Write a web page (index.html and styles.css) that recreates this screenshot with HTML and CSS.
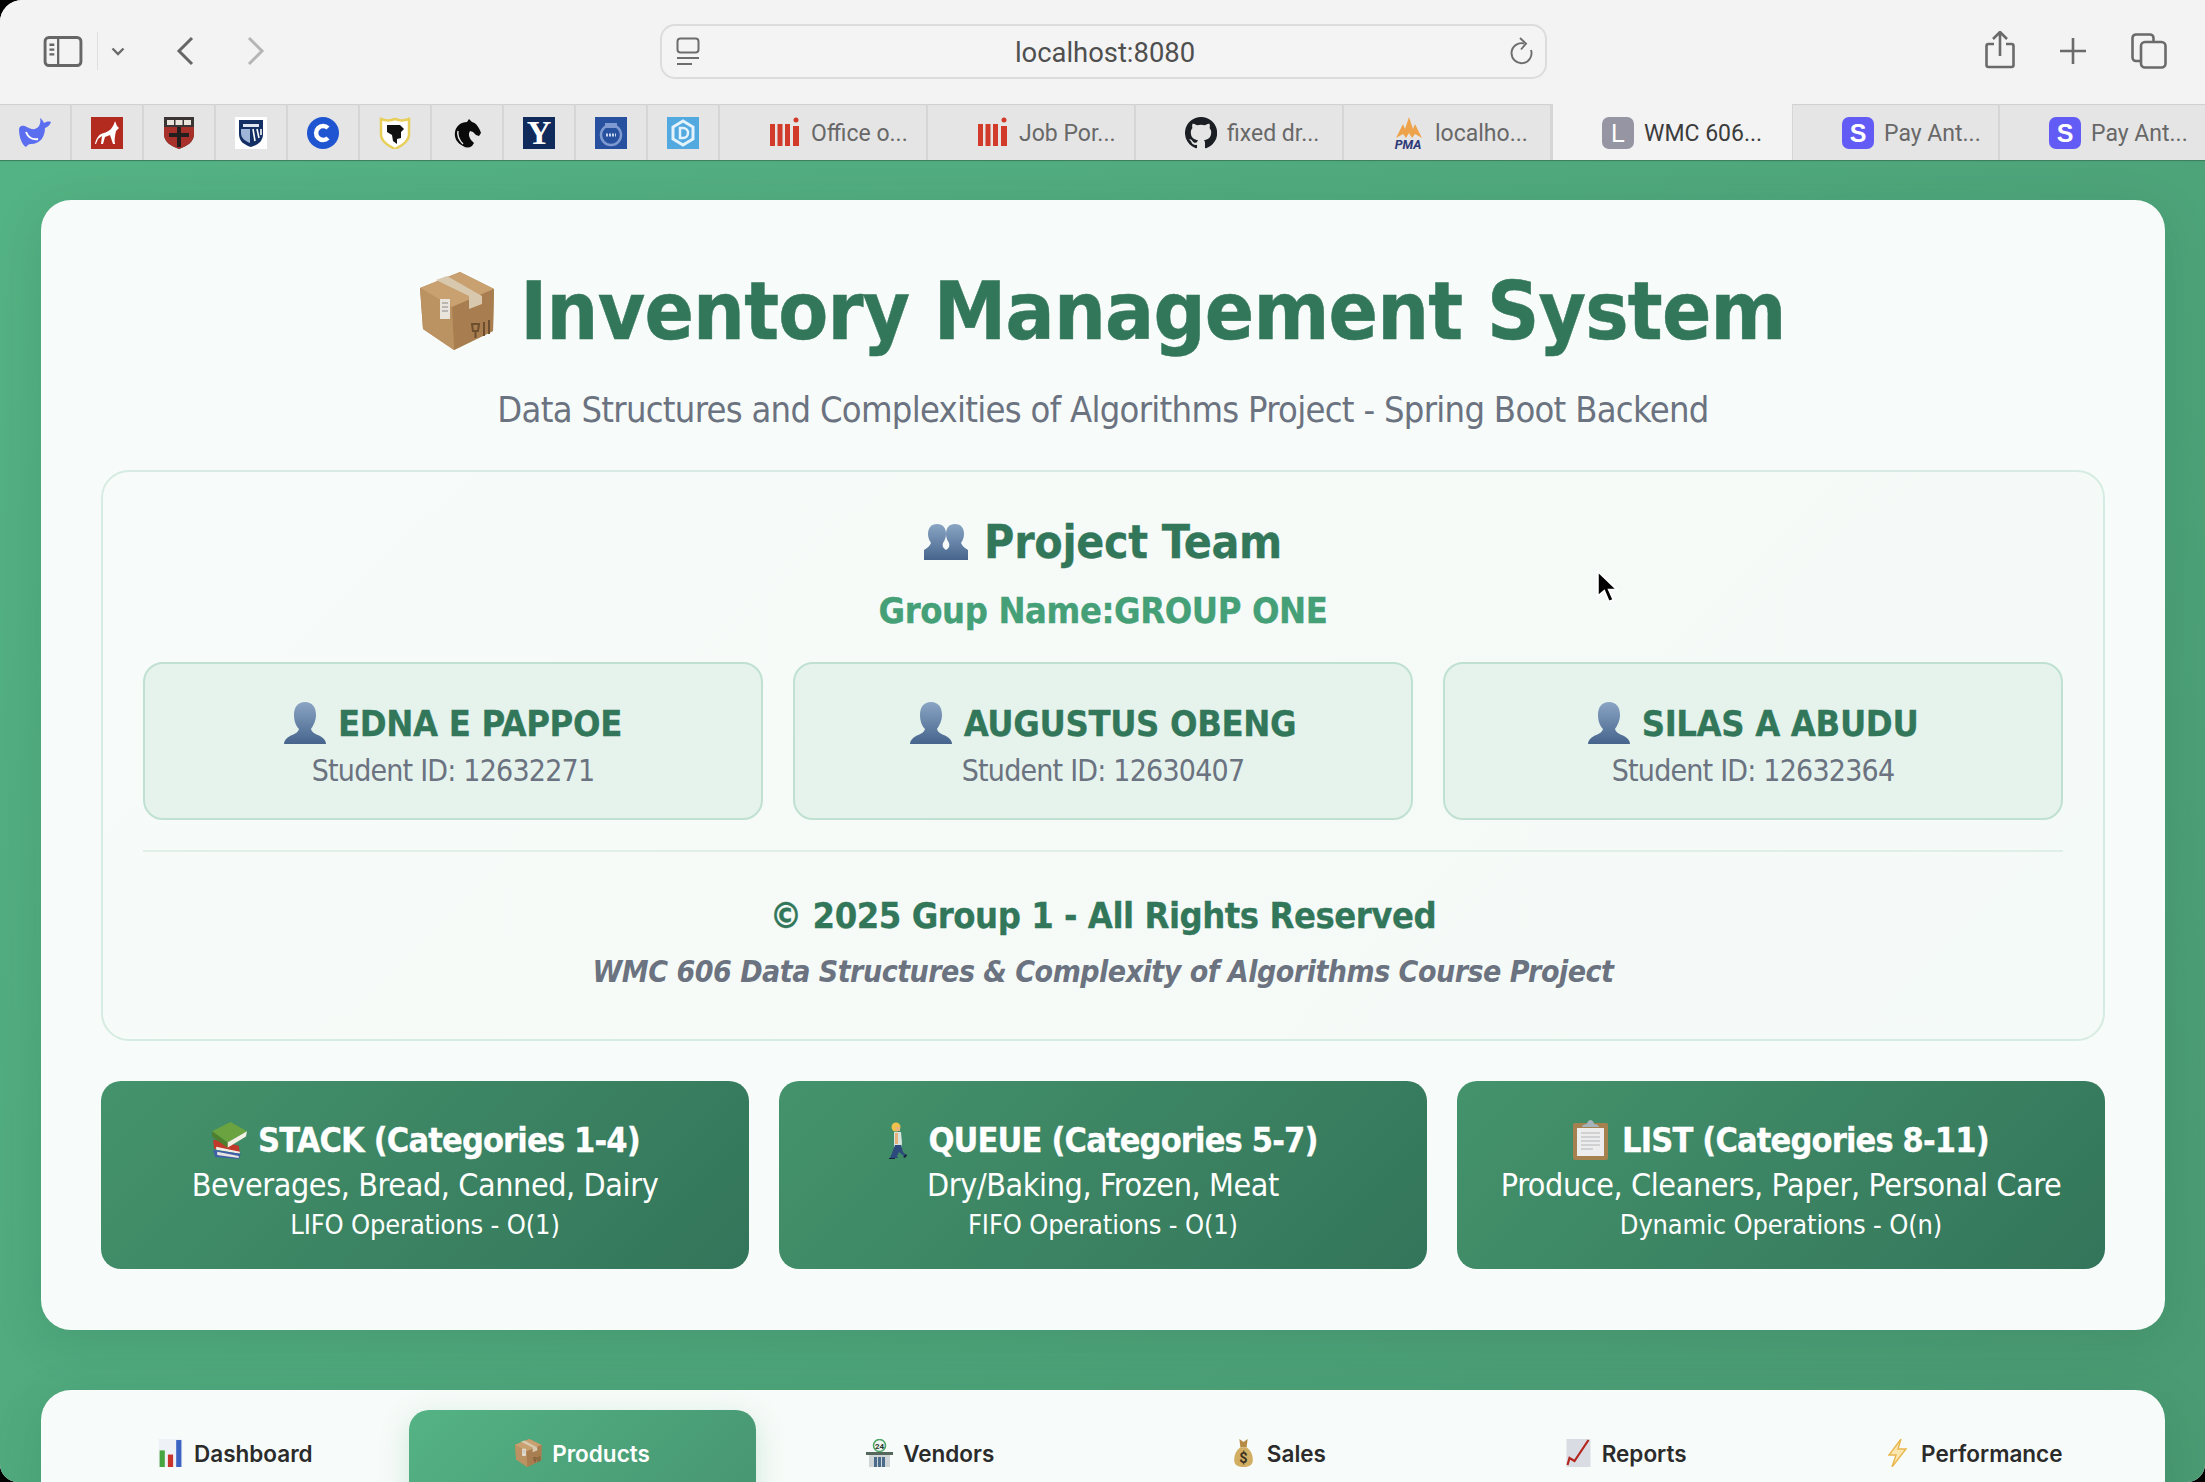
FILE: index.html
```html
<!DOCTYPE html>
<html lang="en">
<head>
<meta charset="utf-8">
<title>WMC 606 Inventory Management System</title>
<link rel="stylesheet" href="styles.css">
</head>
<body>
<svg class="defs" width="0" height="0" aria-hidden="true">
  <defs>
    <linearGradient id="bust" x1="0" y1="0" x2="0" y2="1"><stop offset="0" stop-color="#8aa5c4"/><stop offset="1" stop-color="#46648c"/></linearGradient>
    <symbol id="e-box" viewBox="0 0 75 78">
      <path d="M40 0 74 17 73 59 34 78 3 57 0 16Z" fill="#b48a5a"/>
      <path d="M40 0 74 17 32 35 0 16Z" fill="#c9a070"/>
      <path d="M32 35 74 17 73 59 34 78Z" fill="#a87e50"/>
      <path d="M0 16 32 35 34 78 3 57Z" fill="#bb9262"/>
      <path d="M16 8 27 4 62 24 62 32 49 37 49 24Z" fill="#d8c9ae"/>
      <rect x="20" y="27" width="10" height="20" fill="#e8e4dc"/>
      <path d="M22 31h6M22 35h6M22 39h6" stroke="#8a8a8a" stroke-width="1"/>
      <path d="M52 52h7l-1 7h-5ZM55.500 59v7M64 50v14M69 48v14" fill="none" stroke="#6d4e2e" stroke-width="2"/>
    </symbol>
    <symbol id="e-bust" viewBox="0 0 42 42">
      <path d="M21 0c7 0 11 5 11 13 0 6-3 11-5 14 1 4 5 5 9 7 4 2 6 5 6 8H0c0-3 2-6 6-8 4-2 8-3 9-7-3-3-5-8-5-14C10 5 14 0 21 0Z" fill="url(#bust)"/>
    </symbol>
    <symbol id="e-people" viewBox="0 0 44 36">
      <path d="M13 0c6 0 9 4 9 10 0 3-1 6-3 9-1 3 0 5 3 7l0 10H0V26c3-2 6-4 7-7-2-3-3-6-3-9C4 4 7 0 13 0Z" fill="url(#bust)"/>
      <path d="M31 0c6 0 9 4 9 10 0 3-1 6-3 9 1 3 4 5 7 7v10H22V26c3-2 4-4 3-7-2-3-3-6-3-9 0-6 3-10 9-10Z" fill="url(#bust)"/>
    </symbol>
    <symbol id="e-books" viewBox="0 0 36 36">
      <path d="M3 17 28 23 29 30 4 26Z" fill="#c0392b"/>
      <path d="M6 24 29 29 29 31 6 27Z" fill="#f0ede5"/>
      <path d="M3 27 30 31 28 36 5 34Z" fill="#3f5fa8"/>
      <path d="M7 29 28 33 28 35 7 32Z" fill="#e9e6df"/>
      <path d="M2 9 20 0 36 9 17 20Z" fill="#6aa33f"/>
      <path d="M17 20 36 9 35 14 17 25Z" fill="#f3f0e4"/>
      <path d="M2 9 17 20 17 25 2 14Z" fill="#4d7f2c"/>
    </symbol>
    <symbol id="e-walk" viewBox="0 0 19 37">
      <path d="M6 10h7l1 11-1 6H6Z" fill="#d8e4df"/>
      <path d="M7 23h6l2 7 4 4-2 1-6-5-2 4 1 2H2l2-5Z" fill="#2c4a7c"/>
      <circle cx="8" cy="5" r="4.500" fill="#f0c14b"/>
      <path d="M8 5h4v4H8Z" fill="#e8b27c"/>
      <path d="M7 11h3v11H7Z" fill="#e8b27c"/>
      <path d="M1 36h6v1H1ZM15 35l3-3 1 1-2 3Z" fill="#14233a"/>
    </symbol>
    <symbol id="e-clip" viewBox="0 0 35 40">
      <rect x="0" y="3" width="35" height="37" rx="2" fill="#a5814f"/>
      <rect x="4" y="8" width="27" height="28" fill="#ecedec"/>
      <path d="M8 13h19M8 17h19M8 21h19M8 25h19M8 29h12" stroke="#c5c8ca" stroke-width="1.500"/>
      <path d="M9 7c0-2 3-3 5-3 0-2 2-4 3.500-4S21 2 21 4c2 0 5 1 5 3Z" fill="#a6b3ba"/>
    </symbol>
    <symbol id="e-chart" viewBox="0 0 23 27">
      <rect width="23" height="27" fill="#eef1f6"/>
      <rect x="1" y="11" width="5" height="16" fill="#46a53e"/>
      <rect x="9" y="15" width="5" height="12" fill="#c8332b"/>
      <rect x="17" y="1" width="5" height="26" fill="#3a63c4"/>
    </symbol>
    <symbol id="e-store" viewBox="0 0 27 28">
      <circle cx="13.500" cy="6.500" r="6" fill="#f2f6f2" stroke="#4ea56a" stroke-width="1.600"/>
      <text x="13.500" y="9.500" font-size="8" font-weight="700" text-anchor="middle" fill="#2b3a30" font-family="Roboto, sans-serif">24</text>
      <path d="M0 13h27v3H0Z" fill="#56685c"/>
      <rect x="3" y="16" width="21" height="12" fill="#cfd5d6"/>
      <rect x="8" y="18" width="11" height="10" fill="#4b6b8a"/>
      <path d="M11.500 18v10M15.500 18v10" stroke="#cfd5d6"/>
    </symbol>
    <symbol id="e-bag" viewBox="0 0 20 27">
      <path d="M6 0 10 3 14 0 13 8H7Z" fill="#b58b45"/>
      <path d="M7 8h6c4 3 6 7 6 12 0 5-3 7-9 7s-9-2-9-7c0-5 2-9 6-12Z" fill="#d2ae63"/>
      <text x="10" y="23" font-size="14" font-weight="700" text-anchor="middle" fill="#3b3322" font-family="Roboto, sans-serif">$</text>
    </symbol>
    <symbol id="e-up" viewBox="0 0 24 28">
      <rect width="24" height="28" fill="#d9dde3"/>
      <path d="M1 26 3 19 8 22 22 1" fill="none" stroke="#b3261e" stroke-width="2.200"/>
    </symbol>
    <symbol id="e-bolt" viewBox="0 0 21 28">
      <path d="M14 0 2 16h7L5 28 19 10h-8Z" fill="#fbe6b0" stroke="#eab64e" stroke-width="1.400"/>
    </symbol>
  </defs>
</svg>
<div class="window">
  <header class="toolbar">
    <div class="tool-left">
      <svg class="ic-sidebar" viewBox="0 0 40 32"><rect x="1.500" y="1.500" width="37" height="29" rx="4" fill="none" stroke="#666" stroke-width="3"/><path d="M15 2v28M6 9h5M6 14h5M6 19h5" stroke="#666" stroke-width="2.400"/></svg>
      <span class="tool-sep"></span>
      <svg class="ic-chev" viewBox="0 0 14 9"><path d="M1.500 1.500 7 7l5.500-5.500" fill="none" stroke="#6a6a6a" stroke-width="2.400"/></svg>
      <svg class="ic-nav" viewBox="0 0 18 30"><path d="M16 2 3 15l13 13" fill="none" stroke="#666" stroke-width="3"/></svg>
      <svg class="ic-nav ic-fwd" viewBox="0 0 18 30"><path d="M2 2l13 13L2 28" fill="none" stroke="#b5b5b5" stroke-width="3"/></svg>
    </div>
    <div class="urlbar">
      <svg class="ic-layout" viewBox="0 0 24 28"><rect x="1.500" y="1.500" width="21" height="14" rx="3" fill="none" stroke="#6d6d6d" stroke-width="2"/><path d="M1 21h22M1 27h15" stroke="#6d6d6d" stroke-width="2"/></svg>
      <span class="url-text">localhost:8080</span>
      <svg class="ic-reload" viewBox="0 0 24 28"><path d="M14 6.500A10 10 0 1 0 21 13" fill="none" stroke="#6d6d6d" stroke-width="1.900"/><path d="M10 1l6 5.500-5 6" fill="none" stroke="#6d6d6d" stroke-width="1.900"/></svg>
    </div>
    <div class="tool-right">
      <svg class="ic-share" viewBox="0 0 30 38"><path d="M9 13H3.500A2 2 0 0 0 1.500 15v19a2 2 0 0 0 2 2h23a2 2 0 0 0 2-2V15a2 2 0 0 0-2-2H21M15 25V2M8 8l7-7 7 7" fill="none" stroke="#6a6a6a" stroke-width="2.600"/></svg>
      <svg class="ic-plus" viewBox="0 0 28 28"><path d="M14 1v26M1 14h26" stroke="#6a6a6a" stroke-width="2.600"/></svg>
      <svg class="ic-tabs" viewBox="0 0 36 36"><path d="M9 28H5a3.500 3.500 0 0 1-3.500-3.500V5A3.500 3.500 0 0 1 5 1.500h14A3.500 3.500 0 0 1 22.500 5v4" fill="none" stroke="#6a6a6a" stroke-width="2.600"/><rect x="10" y="9" width="24.500" height="25.500" rx="4" fill="none" stroke="#6a6a6a" stroke-width="2.600"/></svg>
    </div>
  </header>
  <nav class="tabstrip">
    <div class="tab tab-icon"><svg class="fav" viewBox="0 0 32 32"><path d="M0 12C1 8 4 8 8 10c5 3 9 3 12-1 1-2 2-5 1-8 2 1 3 3 4 5 2-1 4-2 7-1-1 3-3 5-6 6 0 9-5 16-14 16-3 0-4 2-5 3C3 28 0 20 0 12Z" fill="#5b6ef0"/><path d="M7 15c2 5 6 8 12 7" stroke="#fff" stroke-width="2" fill="none"/></svg></div>
    <div class="tab tab-icon"><svg class="fav" viewBox="0 0 32 32"><rect width="32" height="32" fill="#b32a1e"/><path d="M4 27c1-6 4-10 9-11 4-1 9-4 11-12l2 5 2 2-3 3c-1 5-2 9-1 13h-2l-3-9-5 2-2 7h-2l1-8-4 3-2 5Z" fill="#fff"/></svg></div>
    <div class="tab tab-icon"><svg class="fav" viewBox="0 0 32 32"><path d="M1 0h30v17c0 8-7 12-15 15C8 29 1 25 1 17Z" fill="#3b3535"/><path d="M1 10h30v7c0 8-7 12-15 15C8 29 1 25 1 17Z" fill="#a8302a"/><path d="M14 10h4v6h8v4h-8v10h-4V20H6v-4h8Z" fill="#241f1f"/><path d="M4 3h7v5H4ZM12.500 3h7v5h-7ZM21 3h7v5h-7Z" fill="#e8e4dc"/></svg></div>
    <div class="tab tab-icon"><svg class="fav" viewBox="0 0 32 32"><rect width="32" height="32" fill="#fff"/><path d="M4 3h24v14c0 7-5 11-12 13C9 28 4 24 4 17Z" fill="#142f63"/><path d="M6 12h9v14c-5-2-9-5-9-10Z" fill="#9fb6d8"/><path d="M18 12l2 12M22 12l2 9M26 12v6" stroke="#fff" stroke-width="1.600"/><path d="M8 7h16v3H8Z" fill="#dfe6f2"/></svg></div>
    <div class="tab tab-icon"><svg class="fav" viewBox="0 0 32 32"><circle cx="16" cy="16" r="16" fill="#1f55d0"/><path d="M21 11a7 7 0 1 0 0 10" fill="none" stroke="#fff" stroke-width="4.500"/></svg></div>
    <div class="tab tab-icon"><svg class="fav" viewBox="0 0 32 32"><path d="M2 2c5 2 9 2 14 0 5 2 9 2 14 0v15c0 7-6 11-14 15C8 28 2 24 2 17Z" fill="#fff" stroke="#e8cf5a" stroke-width="2.500"/><path d="M8 8h13l4 4-3 3v6l-4 1v5l-4-3-1-6-5-3Z" fill="#111"/></svg></div>
    <div class="tab tab-icon"><svg class="fav" viewBox="0 0 32 32"><path d="M18 2l3 3c4 1 7 5 9 11l-2 3-3-1-3-3-3-1c-2 3-1 6 1 9l3 3-2 3c-3 2-6 2-9 0-6-3-9-8-8-14C5 9 10 5 16 5Z" fill="#0a0a0a"/><path d="M7 14c-1 5 1 9 5 13" stroke="#e5e5e5" stroke-width="1.500" fill="none"/></svg></div>
    <div class="tab tab-icon"><div class="fav-y">Y</div></div>
    <div class="tab tab-icon"><svg class="fav" viewBox="0 0 32 32"><rect width="32" height="32" fill="#27509f"/><circle cx="16" cy="18" r="10" fill="none" stroke="#7f9ad0" stroke-width="2.500"/><path d="M10 6h12v5H10Z" fill="#7f9ad0"/><path d="M11 18h10" stroke="#c8d5ee" stroke-width="3" stroke-dasharray="2 1"/></svg></div>
    <div class="tab tab-icon"><svg class="fav" viewBox="0 0 32 32"><rect width="32" height="32" fill="#51a9e0"/><path d="M16 4l10 6v12l-10 6-10-6V10Z" fill="none" stroke="#e4f3fb" stroke-width="3"/><path d="M13 11h3a5 5 0 0 1 0 10h-3Z" fill="none" stroke="#e4f3fb" stroke-width="2.500"/></svg></div>
    <div class="tab tab-text"><svg class="fav" viewBox="0 0 32 32"><path d="M1 7h5v22H1ZM8.500 7h5v22h-5ZM16 7h5v22h-5ZM24 9h6v20h-6Z" fill="#d23a2a"/><circle cx="27" cy="3" r="2.500" fill="#d23a2a"/></svg><span>Office o...</span></div>
    <div class="tab tab-text"><svg class="fav" viewBox="0 0 32 32"><path d="M1 7h5v22H1ZM8.500 7h5v22h-5ZM16 7h5v22h-5ZM24 9h6v20h-6Z" fill="#d23a2a"/><circle cx="27" cy="3" r="2.500" fill="#d23a2a"/></svg><span>Job Por...</span></div>
    <div class="tab tab-text"><svg class="fav" viewBox="0 0 16 16"><path fill="#1b1f24" d="M8 0a8 8 0 0 0-2.530 15.590c.4.070.55-.170.55-.380v-1.340c-2.230.480-2.700-1.070-2.700-1.070-.360-.930-.890-1.170-.890-1.170-.730-.500.050-.490.050-.490.800.060 1.230.830 1.230.830.710 1.220 1.870.870 2.330.660.070-.520.280-.870.510-1.070-1.780-.200-3.650-.890-3.650-3.950 0-.870.310-1.590.820-2.150-.080-.200-.360-1.020.080-2.120 0 0 .670-.210 2.200.820a7.600 7.600 0 0 1 4 0c1.530-1.040 2.200-.820 2.200-.820.440 1.100.160 1.920.080 2.120.510.560.820 1.270.820 2.150 0 3.070-1.870 3.750-3.650 3.950.290.250.540.730.540 1.480v2.190c0 .210.150.460.550.380A8 8 0 0 0 8 0Z"/></svg><span>fixed dr...</span></div>
    <div class="tab tab-text"><svg class="fav" viewBox="0 0 32 32"><path d="M3 21 10 7l2 5 4-12 4 12 2-5 7 14-7-4-3 4-3-5-3 5-3-4Z" fill="#eea24b"/><text x="15" y="31.500" font-size="12.500" font-weight="700" font-style="italic" text-anchor="middle" fill="#2f3a78" font-family="Roboto, sans-serif">PMA</text></svg><span>localho...</span></div>
    <div class="tab tab-text tab-active"><div class="fav-letter fav-l">L</div><span>WMC 606...</span></div>
    <div class="tab tab-text tab-pay"><div class="fav-letter fav-s">S</div><span>Pay Ant...</span></div>
    <div class="tab tab-text tab-pay tab-last"><div class="fav-letter fav-s">S</div><span>Pay Ant...</span></div>
  </nav>
  <main class="page">
    <section class="card hero">
      <h1 class="title"><svg class="emoji em-title"><use href="#e-box"/></svg><span>Inventory Management System</span></h1>
      <p class="subtitle">Data Structures and Complexities of Algorithms Project - Spring Boot Backend</p>
      <div class="team">
        <h2 class="team-head"><svg class="emoji em-people"><use href="#e-people"/></svg><span>Project Team</span></h2>
        <p class="group">Group Name:GROUP ONE</p>
        <div class="members">
          <div class="member"><div class="m-name"><svg class="emoji em-bust"><use href="#e-bust"/></svg><span>EDNA E PAPPOE</span></div><div class="m-id">Student ID: 12632271</div></div>
          <div class="member"><div class="m-name"><svg class="emoji em-bust"><use href="#e-bust"/></svg><span>AUGUSTUS OBENG</span></div><div class="m-id">Student ID: 12630407</div></div>
          <div class="member"><div class="m-name"><svg class="emoji em-bust"><use href="#e-bust"/></svg><span>SILAS A ABUDU</span></div><div class="m-id">Student ID: 12632364</div></div>
        </div>
        <div class="foot">
          <p class="copy">© 2025 Group 1 - All Rights Reserved</p>
          <p class="course">WMC 606 Data Structures &amp; Complexity of Algorithms Course Project</p>
        </div>
      </div>
      <div class="structs">
        <div class="struct"><div class="s-title"><svg class="emoji em-books"><use href="#e-books"/></svg><span>STACK (Categories 1-4)</span></div><div class="s-sub">Beverages, Bread, Canned, Dairy</div><div class="s-op">LIFO Operations - O(1)</div></div>
        <div class="struct"><div class="s-title"><svg class="emoji em-walk"><use href="#e-walk"/></svg><span>QUEUE (Categories 5-7)</span></div><div class="s-sub">Dry/Baking, Frozen, Meat</div><div class="s-op">FIFO Operations - O(1)</div></div>
        <div class="struct"><div class="s-title"><svg class="emoji em-clip"><use href="#e-clip"/></svg><span>LIST (Categories 8-11)</span></div><div class="s-sub">Produce, Cleaners, Paper, Personal Care</div><div class="s-op">Dynamic Operations - O(n)</div></div>
      </div>
    </section>
    <section class="card navcard">
      <div class="nav-tab"><svg class="emoji em-nav"><use href="#e-chart"/></svg><span>Dashboard</span></div>
      <div class="nav-tab nav-active"><svg class="emoji em-nav"><use href="#e-box"/></svg><span>Products</span></div>
      <div class="nav-tab"><svg class="emoji em-nav"><use href="#e-store"/></svg><span>Vendors</span></div>
      <div class="nav-tab"><svg class="emoji em-nav"><use href="#e-bag"/></svg><span>Sales</span></div>
      <div class="nav-tab"><svg class="emoji em-nav"><use href="#e-up"/></svg><span>Reports</span></div>
      <div class="nav-tab"><svg class="emoji em-nav"><use href="#e-bolt"/></svg><span>Performance</span></div>
    </section>
  </main>
  <svg class="cursor" viewBox="0 0 24 36"><path d="M2 1v27l7-6 5 12 5-2-5-11h9Z" fill="#000" stroke="#fff" stroke-width="2"/></svg>
</div>
</body>
</html>
```
FILE: styles.css
```css
* { box-sizing: border-box; }
html, body { margin: 0; height: 100%; background: #000; overflow: hidden; }
.defs { position: absolute; }
.window {
  position: relative;
  width: 2205px;
  height: 1482px;
  overflow: hidden;
  border-radius: 22px 0 18px 18px;
  display: flex;
  flex-direction: column;
  background: #f3f3f3;
  font-family: "DejaVu Sans Condensed", "DejaVu Sans", sans-serif;
}
.toolbar {
  height: 104px;
  flex: none;
  display: flex;
  align-items: center;
  padding-bottom: 2px;
  background: #f3f3f3;
}
.tool-left { width: 660px; flex: none; display: flex; align-items: center; padding-left: 43px; }
.ic-sidebar { width: 40px; height: 31px; }
.tool-sep { width: 1px; height: 38px; background: #e0e0e0; margin-left: 14px; }
.ic-chev { width: 14px; height: 9px; margin-left: 13px; }
.ic-nav { width: 18px; height: 30px; margin-left: 51px; }
.ic-fwd { margin-left: 53px; }
.urlbar {
  width: 887px;
  height: 55px;
  flex: none;
  display: flex;
  align-items: center;
  justify-content: space-between;
  padding: 0 11px 0 14px;
  border: 2px solid #dcdcdc;
  border-radius: 15px;
  background: #f4f4f4;
}
.ic-layout { width: 24px; height: 28px; }
.ic-reload { width: 24px; height: 28px; }
.url-text { padding-top: 3px; font: 400 27.400px Roboto, sans-serif; color: #4f4f4f; }
.tool-right { flex: 1; display: flex; align-items: center; padding-left: 438px; }
.ic-share { width: 30px; height: 38px; margin-top: -2px; }
.ic-plus { width: 28px; height: 28px; margin-left: 44px; }
.ic-tabs { width: 36px; height: 36px; margin-left: 44px; }

.tabstrip {
  height: 56px;
  flex: none;
  display: flex;
  background: #e5e5e5;
  box-shadow: inset 0 2px 1px -1px #cfcfcf;
}
.tab {
  flex: none;
  display: flex;
  align-items: center;
  gap: 10px;
  padding-top: 2px;
  border-right: 2px solid #d6d6d6;
  font: 400 23px Roboto, sans-serif;
  color: #686868;
}
.tab-icon { width: 72px; justify-content: center; }
.tab-text { width: 208px; padding-left: 49px; }
.tab-active { width: 241px; background: #f3f3f3; color: #3c3c3c; border-left: 1px solid #d6d6d6; border-right: 1px solid #d6d6d6; }
.tab-pay { width: 207px; }
.tab-last { width: 205px; border-right: 0; }
.fav { width: 32px; height: 32px; flex: none; }
.fav-y, .fav-letter {
  width: 32px;
  height: 32px;
  flex: none;
  display: flex;
  align-items: center;
  justify-content: center;
  color: #fff;
  font-family: "Liberation Sans", sans-serif;
  font-weight: 700;
}
.fav-y { background: #102a5c; font-family: "Liberation Serif", serif; font-size: 34px; }
.fav-letter { border-radius: 7px; font-size: 25px; }
.fav-l { background: #9595a3; font-weight: 400; }
.fav-s { background: #635bf5; }

.page {
  flex: 1;
  min-height: 0;
  display: flex;
  flex-direction: column;
  gap: 60px;
  padding: 40px 40px 0 41px;
  background: linear-gradient(135deg, #54b384 0%, #4a9b73 100%);
  box-shadow: inset 0 2px 1px -1px #3b7d5c;
}
.card {
  flex: none;
  background: #f7fbf9;
  border-radius: 30px;
  box-shadow: 0 12px 50px rgba(20, 60, 40, 0.12);
}
.hero { height: 1130px; padding: 61px 60px 0; text-align: center; }
.title {
  margin: 0;
  height: 100px;
  display: flex;
  align-items: center;
  justify-content: center;
  gap: 25px;
  font-size: 81px;
  line-height: 100px;
  letter-spacing: -0.8px;
  font-weight: 700;
  color: #33775b;
  -webkit-text-stroke: 0.5px #33775b;
}
.emoji { flex: none; }
.em-title { width: 75px; height: 78px; }
.subtitle { margin: 27px 0 0; font-size: 36px; line-height: 44px; letter-spacing: -0.7px; color: #6b7280; }
.team {
  margin-top: 38px;
  height: 571px;
  padding: 40px 40px 0;
  border: 2px solid #d6ece2;
  border-radius: 28px;
  background: linear-gradient(135deg, #f7fbf9 0%, #f4faf7 100%);
}
.team-head {
  margin: 0;
  height: 60px;
  display: flex;
  align-items: center;
  justify-content: center;
  gap: 16px;
  font-size: 46px;
  letter-spacing: -0.3px;
  font-weight: 700;
  color: #33775b;
  -webkit-text-stroke: 0.3px #33775b;
}
.em-people { width: 44px; height: 36px; }
.group { margin: 17px 0 0; font-size: 36px; line-height: 44px; letter-spacing: -0.4px; font-weight: 700; color: #45a077; -webkit-text-stroke: 0.3px #45a077; }
.members { margin-top: 29px; display: grid; grid-template-columns: repeat(3, 1fr); gap: 30px; }
.member {
  height: 158px;
  border: 2px solid #c0e1d1;
  border-radius: 20px;
  background: #e5f3ec;
  padding-top: 36px;
}
.m-name {
  height: 46px;
  display: flex;
  align-items: center;
  justify-content: center;
  gap: 12px;
  font-size: 36px;
  letter-spacing: -0.35px;
  font-weight: 700;
  color: #33775b;
  -webkit-text-stroke: 0.3px #33775b;
}
.em-bust { width: 42px; height: 42px; }
.m-id { margin-top: 5px; font-size: 30px; line-height: 40px; letter-spacing: -0.8px; color: #6b7280; }
.foot { margin-top: 30px; border-top: 2px solid #e0f0e8; padding-top: 41px; }
.copy { margin: 0; font-size: 36px; line-height: 46px; letter-spacing: -0.47px; font-weight: 700; color: #33775b; -webkit-text-stroke: 0.3px #33775b; }
.course { margin: 13px 0 0; font-size: 30px; line-height: 40px; letter-spacing: -0.5px; font-weight: 700; font-style: italic; color: #6b7280; }
.structs { margin-top: 40px; display: grid; grid-template-columns: repeat(3, 1fr); gap: 30px; }
.struct {
  height: 188px;
  border-radius: 20px;
  color: #fff;
  padding-top: 36px;
  background: linear-gradient(135deg, #44936c 0%, #33755a 100%);
}
.s-title {
  height: 46px;
  display: flex;
  align-items: center;
  justify-content: center;
  gap: 11px;
  font-size: 34px;
  letter-spacing: -0.85px;
  font-weight: 700;
  -webkit-text-stroke: 0.3px #fff;
}
.em-books { width: 37px; height: 37px; }
.em-walk { width: 19px; height: 37px; margin-right: 10px; }
.em-clip { width: 35px; height: 40px; margin-right: 3px; }
.s-sub { font-size: 32px; line-height: 44px; letter-spacing: -0.4px; }
.s-op { font-size: 27px; line-height: 36px; letter-spacing: -0.15px; }

.navcard {
  height: 200px;
  padding: 20px 20px;
  display: grid;
  grid-template-columns: repeat(6, 347.700px);
  align-items: start;
}
.nav-tab {
  height: 140px;
  padding-top: 29px;
  display: flex;
  align-items: flex-start;
  justify-content: center;
  gap: 10px;
  border-radius: 20px;
  font: 600 22.500px Inter, sans-serif;
  line-height: 30px;
  color: #2b2b2b;
}
.nav-active {
  color: #fff;
  background: linear-gradient(135deg, #54b384 0%, #459270 100%);
  box-shadow: 0 8px 28px rgba(82, 178, 130, 0.25);
}
.em-nav { width: 27px; height: 28px; }
.cursor { position: absolute; left: 1596px; top: 570px; width: 22px; height: 34px; }
```
